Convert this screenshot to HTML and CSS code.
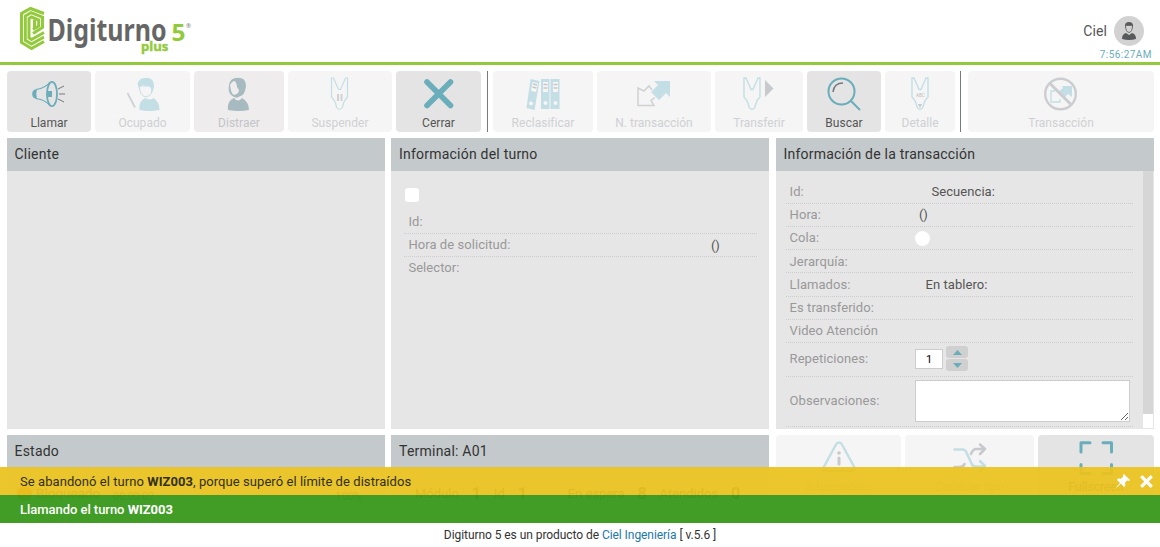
FILE: index.html
```html
<!DOCTYPE html>
<html lang="es">
<head>
<meta charset="utf-8">
<title>Digiturno 5 plus</title>
<link rel="stylesheet" href="styles.css">
</head>
<body>
<header class="header">
  <svg class="logo" width="200" height="56" viewBox="0 0 200 56">
    <g fill="none" stroke="#93ca3c" stroke-width="3" stroke-linejoin="miter">
      <path d="M44 13.500L30.500 8.500L21.500 13.500V42.500L31.500 48.500L44 41.500"/>
      <path d="M43 17.300L31 12.600L25.300 16V40.300L31.500 44L44 37"/>
      <path d="M42.500 16V27.500L33 33.500M44 32.500L31.500 39.500L29 38V18.500L31.500 17L38.700 20V26L33 29.500M34.500 20V29"/>
    </g>
    <text class="logo-name" x="47.500" y="40.500" textLength="119" lengthAdjust="spacingAndGlyphs">Digiturno</text>
    <text class="logo-five" x="171.500" y="41" textLength="14" lengthAdjust="spacingAndGlyphs">5</text>
    <text class="logo-plus" x="141" y="50.500" textLength="27.500" lengthAdjust="spacingAndGlyphs">plus</text>
    <text class="logo-mark" x="186" y="28">®</text>
  </svg>
  <div class="account">
    <div class="user"><span>Ciel</span>
      <svg width="30" height="30" viewBox="0 0 30 30"><circle cx="15" cy="15" r="15" fill="#d2d2d2"/><path fill="#58595b" d="M8 23q0-5 4-6l3 2 3-2q4 1 4 6-7 2-14 0z"/><path fill="#d2d2d2" stroke="#58595b" stroke-width=".8" d="M11.500 9q0 7 3.500 7.500 3.500-.5 3.500-7.500z"/><path fill="#58595b" d="M11 12V9q.5-3 4-3t4 3v3l-1-2.500q-4 .5-6 0z"/></svg>
    </div>
    <div class="clock">7:56:27AM</div>
  </div>
</header>

<nav class="toolbar">
  <button class="tool w84">
    <svg class="icon" viewBox="0 0 34 34"><g fill="none" stroke="#6aadbb" stroke-width="1.200"><path d="M4 12.500Q14 11 18 5M4 21.500Q14 23 18 29"/><ellipse cx="20" cy="17" rx="5" ry="12.200" stroke-width="1.800"/></g><path fill="#6aadbb" d="M5 12Q.2 12.500.2 17T5 22Q3.500 17 5 12zM15 14h5v6h-5q-1-3 0-6z"/><path stroke="#75787f" d="M26 12l6-3M27 17h6M26 22l6 3"/></svg>
    <span>Llamar</span></button>
  <button class="tool off w95">
    <svg class="icon" viewBox="0 0 34 34"><path d="M1.500 16L9 30.500" stroke="#d0d1d4" stroke-width="1.800"/><path fill="#c3dee4" d="M13.500 33q-1-9 6-12 4 3 8 0 6 4 6 12-10 2-20 0z"/><path fill="#f5f5f5" stroke="#c3dee4" d="M13 9q1 9 6 11 8-1 8-11z"/><path fill="#c3dee4" d="M11.500 7Q13 .7 20 .7q8 0 8 8-1 6-3 8 1-6-2-8-2 1-6-1-3 2-4 3z"/></svg>
    <span>Ocupado</span></button>
  <button class="tool off mauve w90">
    <svg class="icon" viewBox="0 0 34 34"><path fill="#a6babf" d="M6 33q-1-9 6-12 4 5 8 0 7 4 7 12-10 2-21 0z"/><path fill="#a6babf" d="M7 8Q8 .7 16 .7t8 8q-1 9-5 10l-4 2Q5 19 7 8z"/><path fill="#efeced" d="M8 8q1 9 4 10 5-1 5-5l-2-3q0-3-2-6-3 0-5 4z"/></svg>
    <span>Distraer</span></button>
  <button class="tool off w104">
    <svg class="icon" viewBox="0 0 34 34"><path fill="none" stroke="#c3dee4" stroke-width="1.200" d="M8.500 1h2l5 11.500h2L22.500 1h2v19q-4 4-5 10-3 5-6 0-1-6-5-10z"/><path stroke="#d0d1d4" stroke-width="2" d="M15 17v7M18.500 17v7"/></svg>
    <span>Suspender</span></button>
  <button class="tool w85">
    <svg class="icon" viewBox="0 0 34 34"><path stroke="#6aadbb" stroke-width="5.600" stroke-linecap="round" d="M5 5l23.500 23.500M28.500 5L5 28.500"/></svg>
    <span>Cerrar</span></button>
  <i class="divider first"></i>
  <button class="tool off w100">
    <svg class="icon" viewBox="0 0 34 34"><path fill="#c3dee4" d="M4.500 2l9 2-5 29-8-2zM15 2h8.500v30h-8.500zM24.500 2h9v30h-9z"/><path fill="#f5f5f5" d="M6.500 5l5.500 1.200-2 8.800-5-1zM17 5h5v10h-5zM27 5h5v10h-5z"/><g fill="#f5f5f5"><circle cx="5" cy="26.500" r="2"/><circle cx="19.500" cy="26" r="2"/><circle cx="29.500" cy="26" r="2"/></g><path stroke="#c7c7ca" stroke-width="1.500" d="M7 7l4 1M6.500 10l4 1M17.500 7.500h4M17.500 11h4M27.500 7.500h4M27.500 11h4"/></svg>
    <span>Reclasificar</span></button>
  <button class="tool off w114">
    <svg class="icon" viewBox="0 0 34 34"><path fill="#c3dee4" d="M17 4h16v16l-4-4-7 7-8-8 7-7z"/><path fill="none" stroke="#d0d1d4" stroke-width="1.500" d="M15 13l-3-4-5 5-6-3v17.500h16l-3-5 4-3"/></svg>
    <span>N. transacción</span></button>
  <button class="tool off w88">
    <svg class="icon" viewBox="0 0 34 34"><path fill="none" stroke="#c3dee4" stroke-width="1.400" d="M2 1h2l5 11.500h2L16 1h2v19q-4 4-5 10-3 5-6 0-1-6-5-10z"/><path fill="#c7c9cd" d="M23 3l8.500 8.500L23 20z"/></svg>
    <span>Transferir</span></button>
  <button class="tool w74">
    <svg class="icon" viewBox="0 0 34 34"><g fill="none" stroke="#6aadbb" stroke-width="2"><circle cx="14.500" cy="14.500" r="13"/><path d="M24 24l9 9"/></g><path fill="none" stroke="#75787f" stroke-width="1.500" d="M6 15q1-9 10-9"/></svg>
    <span>Buscar</span></button>
  <button class="tool off w70">
    <svg class="icon" viewBox="0 0 34 34"><path fill="none" stroke="#c3dee4" stroke-width="1.400" d="M9 1h2l5 11.500h2L23 1h2v19q-4 4-5 10-3 5-6 0-1-6-5-10z"/><text class="badge-text" x="13" y="20">ABC</text><path fill="#c7c9cd" d="M15 27h4l-2 4z"/></svg>
    <span>Detalle</span></button>
  <i class="divider"></i>
  <button class="tool off wide">
    <svg class="icon" viewBox="0 0 34 34"><path fill="#c3dee4" d="M18 9h10v11l-4-3-4 4-6-6 5-4z"/><path fill="none" stroke="#c3dee4" stroke-width="1.300" d="M11 14H7v11h9v-3"/><circle cx="16.500" cy="17" r="15.300" fill="none" stroke="#cccdd0" stroke-width="2.400"/><path stroke="#cccdd0" stroke-width="3" d="M5.500 6l22 22"/></svg>
    <span>Transacción</span></button>
</nav>

<main class="panels">
  <section class="panel"><h2>Cliente</h2><div class="body"></div></section>
  <section class="panel"><h2>Información del turno</h2>
    <div class="body turn">
      <i class="swatch"></i>
      <div class="row"><label>Id:</label></div>
      <div class="row"><label>Hora de solicitud:</label><b class="paren">()</b></div>
      <div class="row"><label>Selector:</label></div>
    </div>
  </section>
  <section class="panel"><h2>Información de la transacción</h2>
    <div class="body scroll">
      <div class="transaction">
        <div class="row"><label>Id:</label><span class="sequence">Secuencia:</span></div>
        <div class="row"><label>Hora:</label><span class="hour">()</span></div>
        <div class="row"><label>Cola:</label><i class="dot"></i></div>
        <div class="row low"><label>Jerarquía:</label></div>
        <div class="row low tall"><label>Llamados:</label><span class="board">En tablero:</span></div>
        <div class="row"><label>Es transferido:</label></div>
        <div class="row"><label>Video Atención</label></div>
        <div class="row repeat"><label>Repeticiones:</label><span class="number">1</span>
          <span class="steps"><i><svg width="9" height="5"><path d="M0 5L4.500 0L9 5z"/></svg></i><i><svg width="9" height="5"><path d="M0 0h9L4.500 5z"/></svg></i></span></div>
        <div class="row notes"><label>Observaciones:</label><textarea></textarea></div>
      </div>
      <div class="track"><i></i></div>
    </div>
  </section>
</main>

<section class="panels lower">
  <section class="panel"><h2>Estado</h2><div class="body status"><i></i><span class="blocked">Bloqueado</span><span class="time">00:00:02</span><span class="percent">100%</span></div></section>
  <section class="panel"><h2>Terminal: A01</h2><div class="body terminal"><span>Módulo</span><b>1</b><span>Id</span><b>1</b><span class="waiting">En espera</span><b>8</b><span>Atendidos</span><b>0</b></div></section>
  <div class="actions">
    <button class="tool off w125"><svg class="icon" viewBox="0 0 34 34"><path fill="none" stroke="#c3dee4" stroke-width="2.400" stroke-linejoin="round" d="M17 1.500q-2 0-3 2L1.500 26.500Q.5 30 4 30h26q3.500 0 2.500-3.500L20 3.500q-1-2-3-2z"/><circle cx="17" cy="12" r="1.800" fill="#c7c9cd"/><path stroke="#c7c9cd" stroke-width="3" stroke-linecap="round" d="M17 17v6"/></svg><span>Información</span></button>
    <button class="tool off w129"><svg class="icon" viewBox="0 0 34 34"><g fill="none" stroke-width="2.500" stroke-linecap="round" stroke-linejoin="round"><path stroke="#c7c9cd" d="M1.500 26h5q4 0 5-3M18 13q2-5 5-5h9M27 3.500l5 4.500-5 5"/><path stroke="#c3dee4" d="M1.500 8.500h8q3 0 4 3l5 11q1 3 4 3h9M27 20l5 5-5 5"/></g></svg><span>Cambiar tipo</span></button>
    <button class="tool w116"><svg class="icon" viewBox="0 0 34 34"><path fill="none" stroke="#6aadbb" stroke-width="3" stroke-linecap="round" stroke-linejoin="round" d="M11 1.700H2V11M24 1.700h8.500V11M2 23.500v9h9M24 32.500h8.500v-9"/></svg><span>Fullscreen</span></button>
  </div>
</section>

<div class="toasts">
  <div class="toast warning"><p>Se abandonó el turno <b>WIZ003</b>, porque superó el límite de distraídos</p>
    <div class="controls"><svg width="14" height="14" viewBox="0 0 14 14"><path fill="#fff" d="M8 0l6 6-1 1-2-.5-2 2.200.3 3-1.300 1.300L4.800 9.800.5 13.800l-.3-.5L4 9 .8 5.700l1.200-1.300 3 .3L7.200 2.500 7 1z"/></svg><svg width="13" height="13" viewBox="0 0 13 13"><path stroke="#fff" stroke-width="3.200" d="M1.200 1.200l10.600 10.600M11.800 1.200L1.200 11.800"/></svg></div></div>
  <div class="toast success"><p>Llamando el turno <b>WIZ003</b></p></div>
</div>
<footer class="footer">Digiturno 5 es un producto de <a>Ciel Ingeniería</a> [ v.5.6 ]</footer>
</body>
</html>
```

FILE: styles.css
```css
* { box-sizing: border-box; }
body { margin: 0; height: 547px; overflow: hidden; position: relative; background: #fff; color: #333; font: 13px Roboto, sans-serif; }
h2, p { margin: 0; font-weight: 400; }

.header { height: 65px; border-bottom: 3px solid #93ca3c; display: flex; justify-content: space-between; }
.logo { flex: none; }
.logo text { font-family: "Noto Sans", sans-serif; font-weight: 700; fill: #93ca3c; }
.logo .logo-name { font-size: 30px; fill: #666; }
.logo .logo-five { font-size: 24px; }
.logo .logo-plus { font-size: 13px; stroke: #93ca3c; stroke-width: .4px; }
.logo .logo-mark { font-size: 6px; font-weight: 400; fill: #777; }
.account { padding: 16px 8px 0 0; }
.user { display: flex; justify-content: flex-end; align-items: center; gap: 7px; padding-right: 8px; font-size: 14px; letter-spacing: .1px; color: #555; }
.clock { margin-top: 2px; font-size: 10px; line-height: 13px; letter-spacing: .45px; color: #6aadbb; text-align: right; }

.toolbar { display: flex; gap: 4px; padding: 6px 6px 0 7px; }
.tool { flex: none; height: 61px; border: 0; border-radius: 4px; background: #e4e4e4; color: #555; padding: 6px 0 0; display: flex; flex-direction: column; align-items: center; gap: 4px; font: 12px/16px Roboto, sans-serif; letter-spacing: .02px; }
.icon { width: 34px; height: 34px; flex: none; fill: none; }
.off { background: #f5f5f5; color: #cfd0d3; }
.mauve { background: #efeced; color: #c3c5c8; }
.badge-text { font: 4.5px Roboto, sans-serif; fill: #bbb; }
.w84 { width: 84px; } .w95 { width: 95px; } .w90 { width: 90px; } .w104 { width: 104px; }
.w85 { width: 85px; } .w100 { width: 100px; } .w114 { width: 114px; } .w88 { width: 88px; }
.w74 { width: 74px; } .w70 { width: 70px; } .w125 { width: 125px; } .w129 { width: 129px; } .w116 { width: 116px; }
.wide { flex: 1; }
.divider { width: 1px; background: #777a80; margin: 0 3px 0 1px; }
.divider.first { margin: 0 1px 0 2px; }

.panels { display: grid; grid-template-columns: 378px 379px 378px; column-gap: 6px; margin: 6px 0 0 7px; height: 291px; }
.panel { display: flex; flex-direction: column; }
.panel:nth-child(2) { width: 378px; }
.panel h2 { height: 33px; background: #c4c9cb; padding-left: 7.5px; font-size: 14px; line-height: 33px; letter-spacing: .22px; }
.panel:nth-child(2) h2 { padding-left: 8px; }
.body { flex: 1; background: #e6e6e6; }
.row { display: flex; height: 23px; border-bottom: 1px dotted #ccc; color: #555; letter-spacing: .06px; }
.row label { color: #999; line-height: 22px; padding-left: 3.600px; width: 129px; flex: none; }
.row > span { line-height: 22px; }
.turn { padding: 17px 12px 0 13px; }
.turn .row label { padding-left: 4.400px; }
.turn .row:last-child { border: 0; }
.swatch { display: block; width: 14px; height: 14px; margin: 0 0 9px 1px; border-radius: 3px; background: #fff; }
.paren { font-weight: 400; line-height: 23px; margin-left: 178px; letter-spacing: -.3px; }
.scroll { display: flex; height: 258px; flex: none; overflow: hidden; }
.transaction { width: 357px; padding: 10px 0 0 10px; margin-right: 10px; }
.transaction .row { height: 23px; }
.transaction .row.low label, .transaction .row.low span { line-height: 24px; }
.transaction .row.tall { height: 24px; }
.transaction .row.repeat { height: 34px; align-items: center; padding-bottom: 1px; }
.transaction .row.notes { height: 50px; align-items: center; padding-bottom: 2px; }
.sequence { margin-left: 16.500px; }
.hour { margin-left: 4px; letter-spacing: -.3px; }
.board { margin-left: 10.500px; }
.dot { width: 15px; height: 15px; border-radius: 50%; background: #fff; margin-top: 4px; }
.row .number { width: 28px; height: 20px; border: 1px solid #ccc; background: #fff; color: #000; text-align: center; line-height: 20px; font-size: 11px; }
.steps { display: grid; gap: 1px; margin: -1px 0 0 3px; }
.steps i { width: 22px; height: 12px; border-radius: 3px; background: #d0d0d0; display: grid; place-items: center; }
.steps svg { fill: #6aadbb; }
textarea { width: 215px; height: 42px; border: 1px solid #ccc; background: #fff; padding: 2px; }
.track { width: 11px; background: #fff; border: solid #e6e6e6; border-width: 0 1px 1px 0; }
.track i { display: block; height: 243px; background: #d6d6d6; }

.lower { height: 86px; }
.status { display: flex; align-items: center; padding: 0 24px 3px 10px; font-size: 13.500px; }
.status i { width: 15px; height: 15px; border-radius: 50%; background: #e25a00; margin-right: 4px; }
.time, .percent { font-size: 10.500px; padding-top: 7px; }
.time { margin-left: 13px; }
.percent { margin-left: auto; }
.terminal { display: flex; align-items: center; padding: 0 0 2px 24px; font-size: 13px; gap: 6.500px; }
.terminal b { font-size: 16px; width: 22px; line-height: 18px; text-align: center; background: #eee; }
.terminal .waiting { margin-left: 28px; }
.actions { display: flex; gap: 4px; }

.toasts { position: absolute; left: 0; right: 0; top: 467px; }
.toast { height: 28px; padding: 0 7px 0 20px; display: flex; align-items: center; justify-content: space-between; }
.toast p { letter-spacing: .06px; }
.warning { background: rgba(234, 194, 31, .94); color: #333018; }
.success { background: rgba(60, 154, 32, .97); color: #fff; }
.success p { font-weight: 500; letter-spacing: -.04px; }
.footer { text-align: center; font-size: 12px; line-height: 16px; margin-top: 6px; letter-spacing: -.06px; }
.footer a { color: #2279a8; }
.controls { display: flex; gap: 10px; align-items: center; }
```
